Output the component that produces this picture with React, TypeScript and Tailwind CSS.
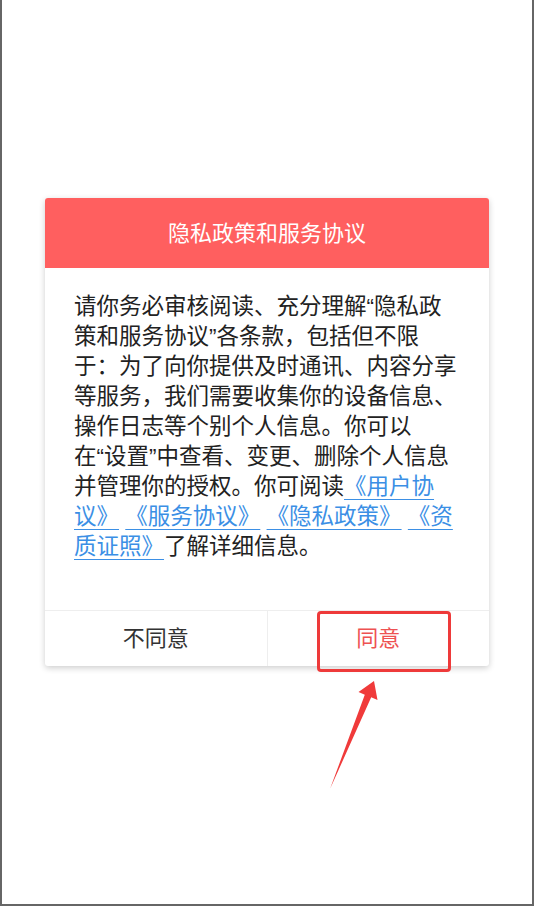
import React from "react";

const font = { fontFamily: '"Liberation Sans", "Noto Sans CJK SC", sans-serif' };

function Link({ children }: { children: React.ReactNode }) {
  return <span className="text-[#3b8fe5] underline decoration-1 underline-offset-[5px]">{children}</span>;
}

export default function App() {
  return (
    <div
      className="relative h-[906px] w-[534px] overflow-hidden border-b-2 border-l-2 border-r-2 border-[#666666] bg-white pl-[43px] pt-[198px]"
      style={font}
    >
      <div className="w-[444px] overflow-hidden rounded-[3px] bg-white shadow-[0_2px_6px_rgba(0,0,0,0.2)]">
        <div className="flex h-[70px] items-center justify-center bg-[#ff5f5f] text-[22px] text-white">
          隐私政策和服务协议
        </div>
        <div className="pb-[48px] pl-[29px] pt-[24px] text-[22.5px] leading-[30px] text-[#222222] whitespace-nowrap">
          请你务必审核阅读、充分理解“隐私政<br />
          策和服务协议”各条款，包括但不限<br />
          于：为了向你提供及时通讯、内容分享<br />
          等服务，我们需要收集你的设备信息、<br />
          操作日志等个别个人信息。你可以<br />
          在“设置”中查看、变更、删除个人信息<br />
          并管理你的授权。你可阅读<Link>《用户协<br />议》</Link> <Link>《服务协议》</Link> <Link>《隐私政策》</Link>{" "}
          <Link>《资<br />质证照》</Link>了解详细信息。
        </div>
        <div className="flex h-[56px] border-t border-[#eeeeee] text-[22px]">
          <div className="flex flex-1 items-center justify-center text-[#333333]">不同意</div>
          <div className="flex flex-1 items-center justify-center border-l border-[#eeeeee] text-[#ee5252]">同意</div>
        </div>
      </div>
      <div className="pointer-events-none absolute left-[315px] top-[611px] h-[61px] w-[134px] rounded-[4px] border-[3px] border-[#ee3a3a]" />
      <svg
        className="pointer-events-none absolute left-[320px] top-[676px]"
        width="64"
        height="120"
        viewBox="320 676 64 120"
      >
        <polygon
          points="372,681 375.5,700 369.2,697.3 328,789 362.8,694.7 356.5,692"
          fill="#f03a3a"
        />
      </svg>
    </div>
  );
}
